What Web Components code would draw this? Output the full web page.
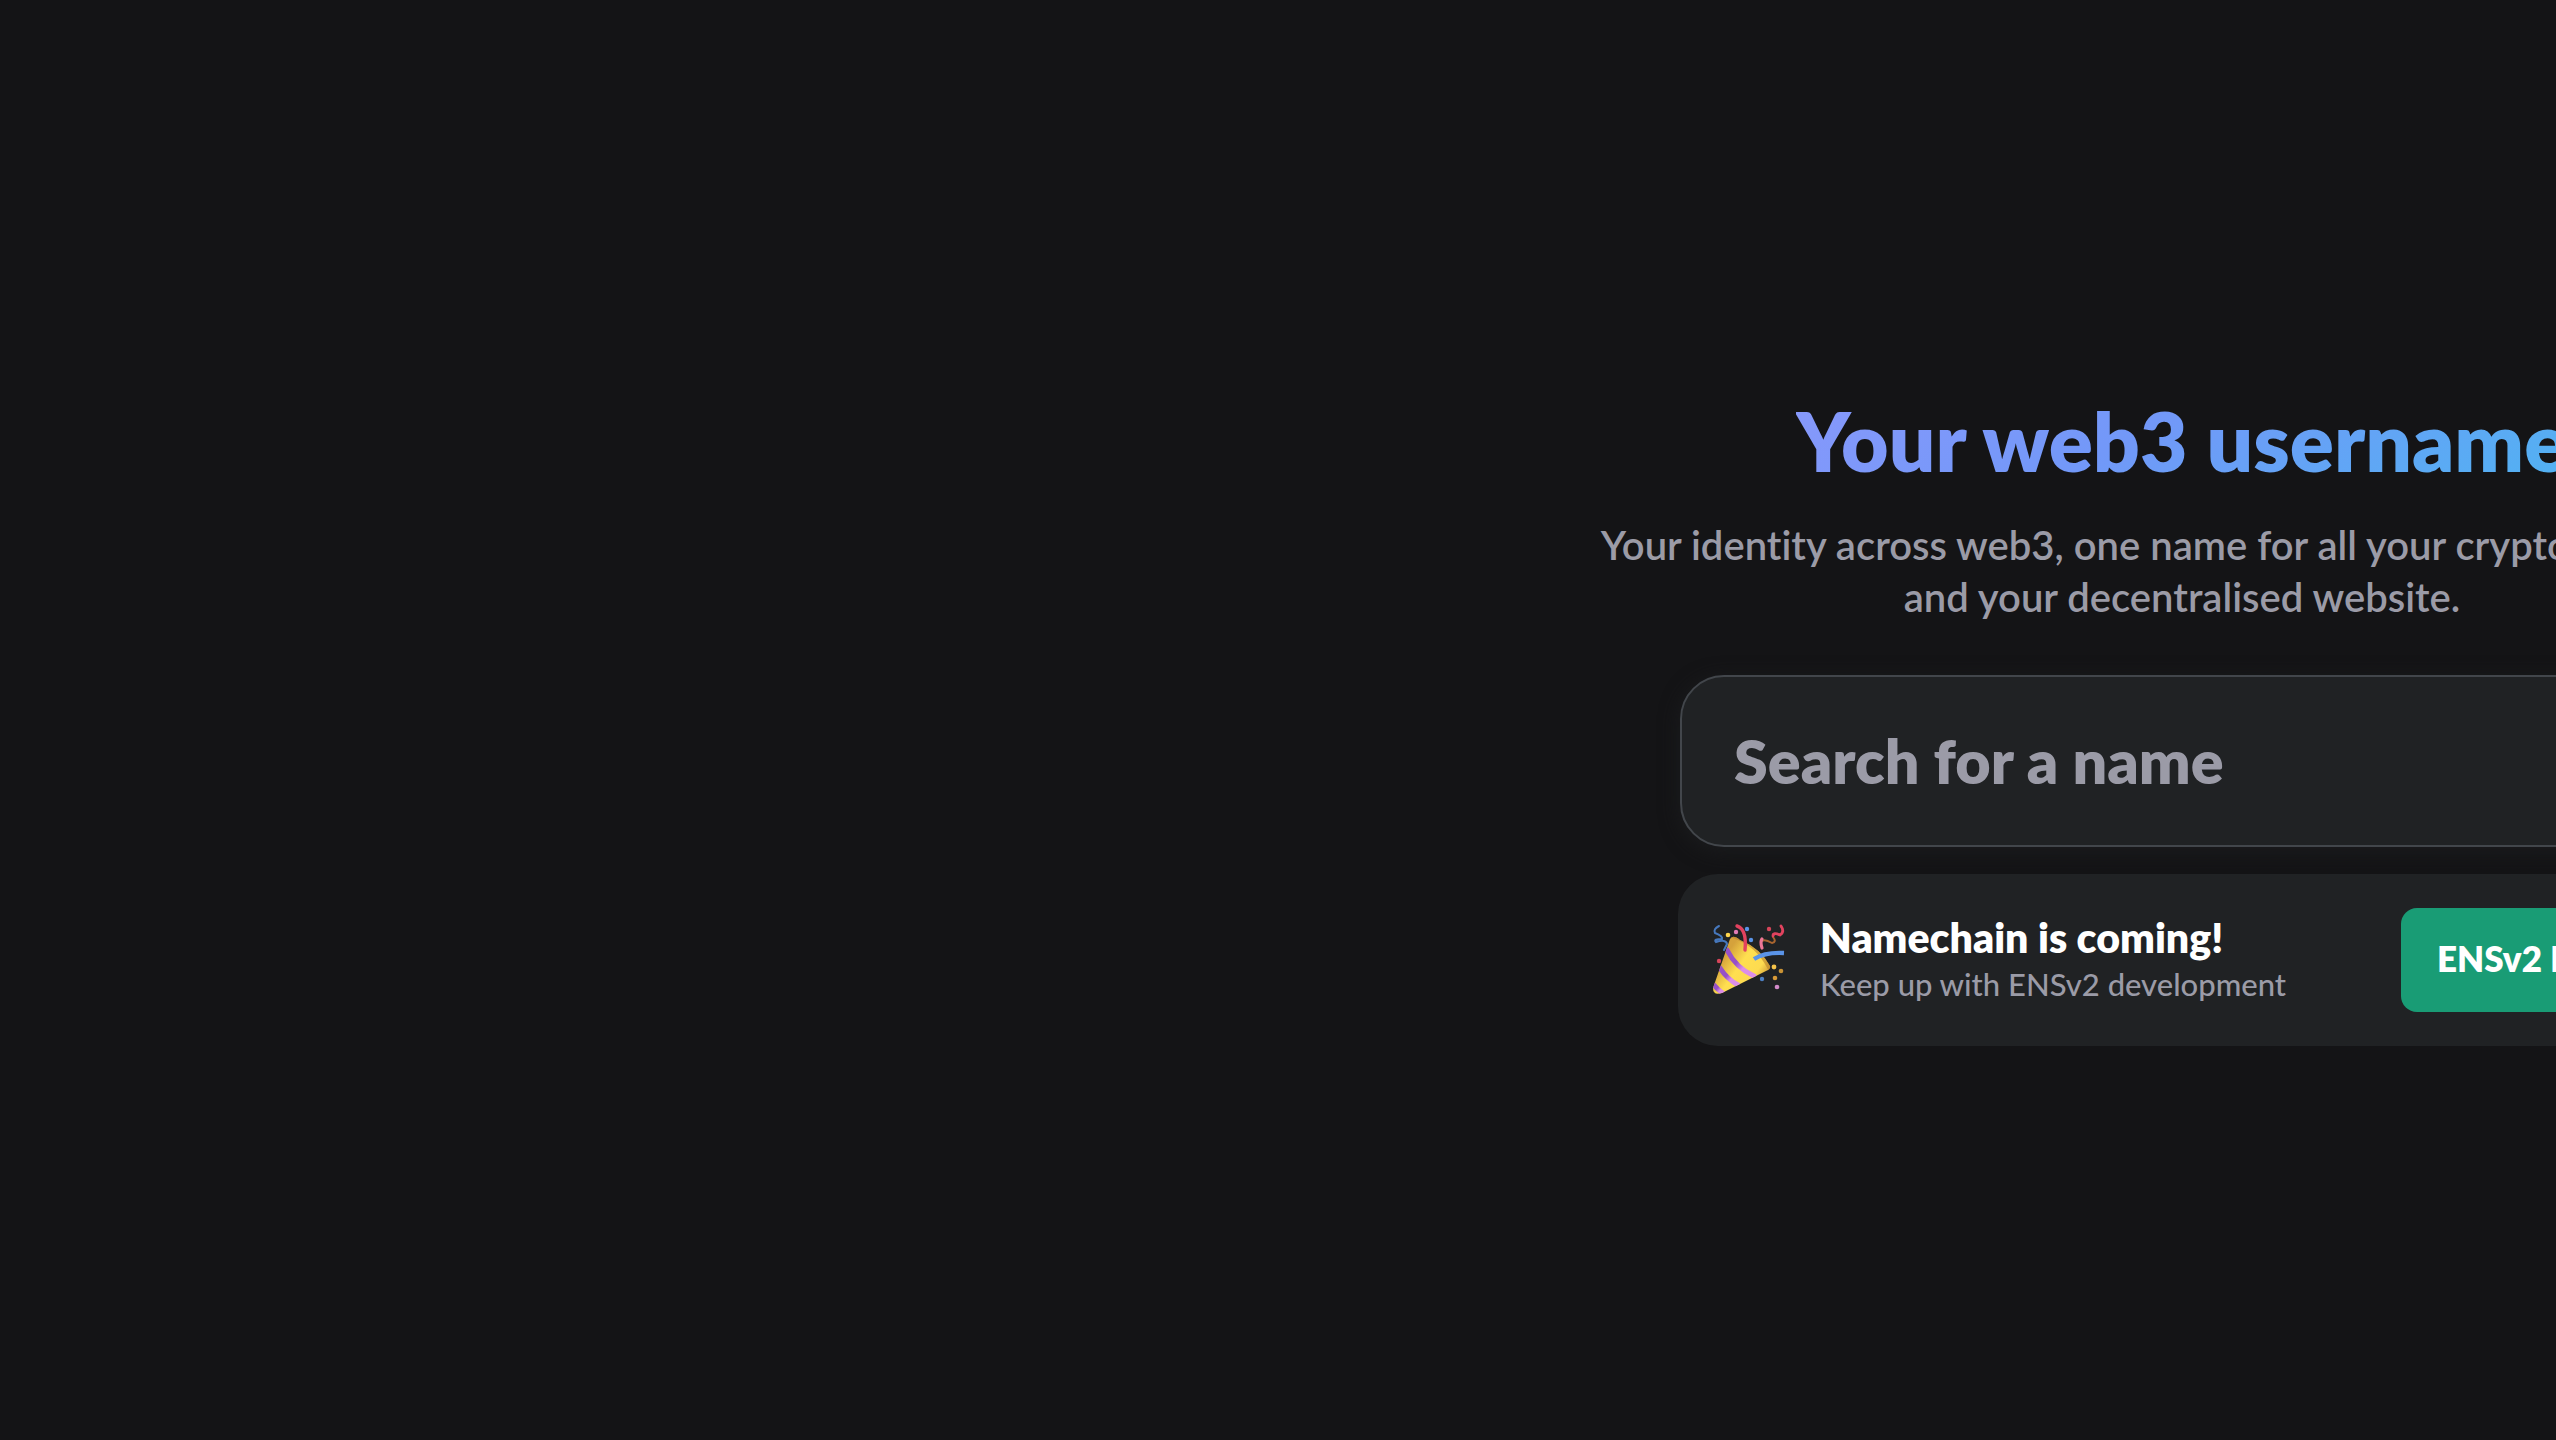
<!DOCTYPE html>
<html lang="en">
<head>
<meta charset="utf-8">
<title>Your web3 username</title>
<style>
  html, body { margin: 0; height: 100%; background: #141416; }
  body {
    --text: #ffffff; --muted: #9b9ba7; --surface: #202224; --line: #42464b; --accent: #199c75;
    font-family: Lato, "Open Sans", sans-serif;
    font-variant-ligatures: none;
    color: var(--text);
    overflow: hidden;
  }
</style>
</head>
<body>
<home-stage>
  <hero-title>Your web3 username</hero-title>
  <hero-text>Your identity across web3, one name for all your crypto addresses,<br>and your decentralised website.</hero-text>
  <name-search placeholder="Search for a name"></name-search>
  <news-banner>
    <party-icon slot="icon"></party-icon>
    <span slot="title">Namechain is coming!</span>
    <span slot="detail">Keep up with ENSv2 development</span>
    <span slot="action">ENSv2 Hub</span>
  </news-banner>
</home-stage>
<script>
const define = (name, html, setup) => customElements.define(name, class extends HTMLElement {
  connectedCallback() {
    if (this.shadowRoot) return;
    this.attachShadow({ mode: 'open' }).innerHTML = html;
    if (setup) setup(this);
  }
});

define('home-stage', `
<style>
  :host { display: flex; align-items: center; min-height: 100vh; overflow: hidden; }
  main { flex: none; width: 1200px; margin-left: calc(100% - 974px); display: flex; flex-direction: column; align-items: center; }
</style>
<main><slot></slot></main>`);

define('hero-title', `
<style>
  :host { display: block; }
  h1 {
    margin: 0; font-size: 82px; line-height: 90px; font-weight: 800; white-space: nowrap;
    background: linear-gradient(330deg, #44bcf0 -20%, #7298f8 56%, #a099ff 149%);
    -webkit-background-clip: text; background-clip: text; color: transparent;
  }
</style>
<h1><slot></slot></h1>`);

define('hero-text', `
<style>
  :host { display: block; margin-top: 34px; }
  p { margin: 0; font-size: 40px; line-height: 52px; font-weight: 600; color: var(--muted); text-align: center; white-space: nowrap; }
</style>
<p><slot></slot></p>`);

define('name-search', `
<style>
  :host { display: block; width: 1004px; margin-top: 52px; }
  input {
    display: block; box-sizing: border-box; width: 100%; height: 172px; padding: 0 52px;
    border: 2px solid var(--line); border-radius: 44px; outline: none;
    background: var(--surface); color: var(--text);
    font: 800 61px Lato, "Open Sans", sans-serif;
    box-shadow: 0 4px 20px #1b1c1e;
  }
  input::placeholder { color: var(--muted); opacity: 1; }
</style>
<input type="text">`, host => {
  const input = host.shadowRoot.querySelector('input');
  input.placeholder = host.getAttribute('placeholder');
  input.setAttribute('aria-label', input.placeholder);
});

define('news-banner', `
<style>
  :host { display: block; width: 1008px; margin-top: 27px; }
  section {
    display: flex; align-items: center; gap: 32px; box-sizing: border-box; padding: 34px;
    border-radius: 40px; background: var(--surface);
  }
  .copy { flex: 1; display: flex; flex-direction: column; padding-bottom: 2px; white-space: nowrap; }
  .title { font-size: 41px; line-height: 50px; font-weight: 800; }
  .detail { font-size: 31px; line-height: 42px; font-weight: 500; color: var(--muted); }
  button {
    flex: none; width: 251px; height: 104px; padding: 0 36px 4px; border: 0; border-radius: 16px;
    background: var(--accent); color: var(--text); text-align: left; white-space: nowrap;
    font: 800 35px Lato, "Open Sans", sans-serif;
  }
</style>
<section>
  <slot name="icon"></slot>
  <div class="copy">
    <div class="title"><slot name="title"></slot></div>
    <div class="detail"><slot name="detail"></slot></div>
  </div>
  <button type="button"><slot name="action"></slot></button>
</section>`);

define('party-icon', `
<style>
  :host { display: block; flex: none; width: 76px; height: 76px; }
  svg { display: block; width: 100%; height: 100%; }
</style>
<svg viewBox="12 12 76 76" aria-hidden="true" fill="none" stroke-linecap="round">
  <defs>
    <linearGradient id="cone" x1="0" y1="0" x2="1" y2=".7">
      <stop offset=".3" stop-color="#d5a23b"/><stop offset=".55" stop-color="#ffdf50"/><stop offset=".8" stop-color="#fddb50"/><stop offset="1" stop-color="#c68c30"/>
    </linearGradient>
    <linearGradient id="band" x1="0" y1="0" x2="1" y2=".8">
      <stop offset=".45" stop-color="#9750c8"/><stop offset=".7" stop-color="#dc8ee8"/>
    </linearGradient>
    <clipPath id="clip"><path d="M30 29Q33 24 40 30Q60 38 70 56Q71 59 66 61L22 83Q13 86 13 78Z"/></clipPath>
  </defs>
  <path d="M30 29Q33 24 40 30Q60 38 70 56Q71 59 66 61L22 83Q13 86 13 78Z" fill="url(#cone)"/>
  <g clip-path="url(#clip)">
    <path d="M34 26Q58 34 70 58" stroke="#b9822d" stroke-width="5" opacity=".6"/>
    <path d="M27 40Q36 58 54 66" stroke="url(#band)" stroke-width="5"/>
    <path d="M20 58Q27 69 38 75" stroke="url(#band)" stroke-width="5"/>
    <path d="M13 74Q18 80 24 84" stroke="url(#band)" stroke-width="5"/>
  </g>
  <path d="M37 16Q47 19 45 40" stroke="#e2425f" stroke-width="3.4"/>
  <path d="M54 49Q65 42 84 43" stroke="#5a94e8" stroke-width="4.4" stroke-linecap="butt"/>
  <path d="M19 16Q13 19 15 23Q23 26 22 29Q13 29 16 32Q26 29 27 34Q26 36 24 40" stroke="#4678bd" stroke-width="2"/>
  <path d="M81 16Q85 22 80 25Q72 22 73 27Q77 32 72 33Q65 29 62 31" stroke="#a9652f" stroke-width="2"/>
  <path d="M81 16Q85 22 80 25Q73 22 73 26" stroke="#e2425f" stroke-width="2.8"/>
  <path d="M62 29Q60 32 62 38" stroke="#ef7897" stroke-width="3.2"/>
  <circle cx="28" cy="25" r="2.3" fill="#ffd54c"/><circle cx="36" cy="22" r="2.2" fill="#e07bb6"/>
  <circle cx="47" cy="19" r="2.2" fill="#5a94e8"/><circle cx="51" cy="30" r="2.2" fill="#5a94e8"/>
  <circle cx="69" cy="19" r="2.2" fill="#d6455a"/><circle cx="19" cy="51" r="2.2" fill="#d6455a"/>
  <circle cx="74" cy="57" r="2.4" fill="#f5c34a"/><circle cx="81" cy="61" r="2.3" fill="#c99335"/>
  <circle cx="75" cy="68" r="2.3" fill="#d89a38"/><circle cx="62" cy="69" r="2.2" fill="#4d80c4"/>
  <circle cx="77" cy="77" r="2.3" fill="#d28ac9"/>
</svg>`);
</script>
</body>
</html>
